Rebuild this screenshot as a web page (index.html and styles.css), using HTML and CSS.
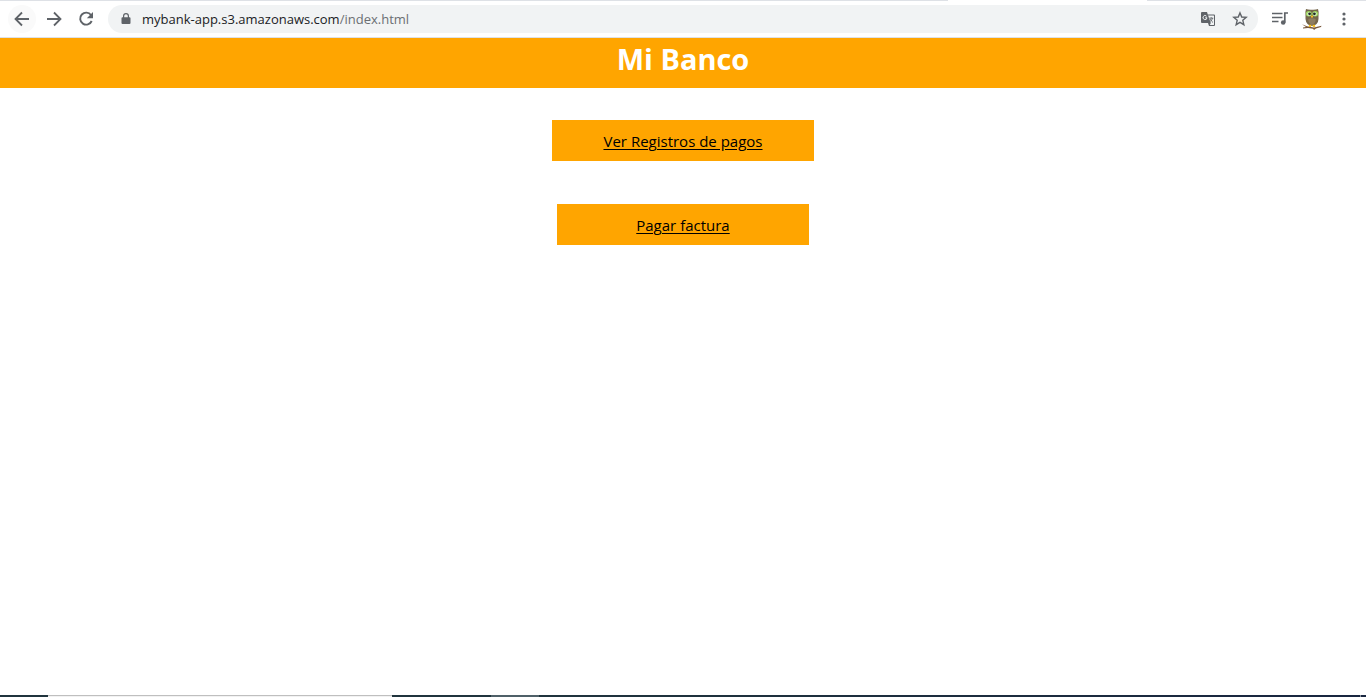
FILE: index.html
```html
<!DOCTYPE html>
<html lang="es">
<head>
<meta charset="utf-8">
<meta name="viewport" content="width=device-width, initial-scale=1">
<title>Mi Banco</title>
<link rel="stylesheet" href="styles.css">
</head>
<body>
<div class="tab-edge"><span class="tab-strip"></span><span class="tab-active"></span><span class="tab-rest"></span></div>
<div class="toolbar">
  <button class="tool tool-hover" type="button" aria-label="Atrás"><svg class="icon" viewBox="0 0 20 20"><path d="M17 10H4M10 3.500 3.500 10l6.500 6.500" fill="none" stroke="currentColor" stroke-width="1.800"/></svg></button>
  <button class="tool" type="button" aria-label="Adelante"><svg class="icon" viewBox="0 0 20 20"><path d="M3 10h13M10 3.500 16.500 10 10 16.500" fill="none" stroke="currentColor" stroke-width="1.800"/></svg></button>
  <button class="tool" type="button" aria-label="Recargar"><svg class="icon" viewBox="0 0 20 20"><path d="M15 6A6 6 0 1 0 15.700 12" fill="none" stroke="currentColor" stroke-width="1.900"/><path d="M17 3v6.200h-6.200z" fill="currentColor"/></svg></button>
  <div class="address">
    <button class="mini lock" type="button" aria-label="Ver información del sitio"><svg class="icon-small" viewBox="0 0 16 16"><path fill="currentColor" d="M5 6.200V5a3 3 0 0 1 6 0v1.200h.5q1 0 1 1V12q0 1-1 1h-7q-1 0-1-1V7.200q0-1 1-1zm1.200 0h3.600V5a1.800 1.800 0 0 0-3.600 0z"/></svg></button>
    <div class="url"><span class="host">mybank-app.s3.amazonaws.com</span>/index.html</div>
    <button class="mini" type="button" aria-label="Traducir"><svg class="icon-small" viewBox="0 0 16 16"><path fill="currentColor" d="M2 1h5l.8 2.500H14q1 0 1 1V14q0 1-1 1H9l-1-3H2q-1 0-1-1V2q0-1 1-1z"/><path fill="#f1f3f4" d="M8.100 4.500h5.400q.5 0 .5.500v8.500q0 .5-.5.500H9.800l1-2z"/><path d="M6.500 5.200A2 2 0 1 0 7 6.800H5.200" fill="none" stroke="#f1f3f4" stroke-width="1"/><path d="M9.300 7.200h4M11.200 6.200v1M12.500 7.200q-.5 1.900-2.300 3.400M10.300 8.200q1 2 2.700 3.300" fill="none" stroke="currentColor" stroke-width=".9"/></svg></button>
    <button class="mini" type="button" aria-label="Añadir a marcadores"><svg class="icon-small" viewBox="0 0 16 16"><path d="m8 1.900 1.750 4.100 4.450.400-3.400 2.900 1.050 4.400L8 11.350 4.150 13.700 5.200 9.300 1.800 6.400 6.250 6z" fill="none" stroke="currentColor" stroke-width="1.400"/></svg></button>
  </div>
  <button class="tool media" type="button" aria-label="Controlar multimedia"><svg class="icon" viewBox="0 0 20 20"><path d="M2 4.500h10.500M2 8.500h10.500M2 12.500h6.500M14.800 13.500v-9.500H18" fill="none" stroke="currentColor" stroke-width="1.700"/><circle cx="13.200" cy="13.500" r="2.300" fill="currentColor"/></svg></button>
  <button class="tool" type="button" aria-label="Perfil"><svg class="avatar" viewBox="0 0 24 24">
    <path d="M2 17.300 7 19.300l7 1.200 7.500-1.700-.5 1.300-5 1.500-2 1.400-1-1.300-5-.8-5 .6v-.9l3-.6z" fill="#79583b"/>
    <path d="M6 2q2 .9 6 .7 4 .2 6-.7 1 3 .5 6v4q-.3 6-6.500 7-6-1-6.500-7V8q-.5-3 .5-6z" fill="#75664b"/>
    <path d="M8.300 12q3.700-1.500 7.400 0 0 4.500-3.700 6-3.700-1.500-3.700-6z" fill="#8f7d60"/>
    <ellipse cx="8.800" cy="6.800" rx="2.900" ry="2.700" fill="#9cd75d"/><ellipse cx="15.200" cy="6.800" rx="2.900" ry="2.700" fill="#9cd75d"/>
    <circle cx="9.200" cy="6.900" r="1.900" fill="#e7f4dc"/><circle cx="14.800" cy="6.900" r="1.900" fill="#e7f4dc"/>
    <circle cx="9.600" cy="6.800" r="1.400" fill="#1d2b20"/><circle cx="14.400" cy="6.800" r="1.400" fill="#1d2b20"/>
    <path d="m12 8 1.200 1.500L12 11.200l-1.200-1.700zM9 17.800h2.300l-.3 2.200H8.800zm3.700 0H15l.3 2.200h-2.500z" fill="#f6c026"/></svg></button>
  <button class="tool" type="button" aria-label="Menú"><svg class="icon" viewBox="0 0 20 20" fill="currentColor"><circle cx="10" cy="5" r="1.600"/><circle cx="10" cy="10" r="1.600"/><circle cx="10" cy="15" r="1.600"/></svg></button>
</div>
<header class="header"><h1 class="title">Mi Banco</h1></header>
<main class="actions">
  <a class="action action-records" href="#registros">Ver Registros de pagos</a>
  <a class="action action-pay" href="#pagar">Pagar factura</a>
</main>
<div class="taskbar"><span class="task-start"></span><span class="task-search"></span><span class="task-apps"></span><span class="task-open"></span><span class="task-rest"></span><span class="task-end"></span></div>
</body>
</html>
```
FILE: styles.css
```css
* { box-sizing: border-box; }
body {
  margin: 0;
  min-height: 100vh;
  display: flex;
  flex-direction: column;
  background: #fff;
  color: #000;
  font-family: "Segoe UI", "Open Sans", "Noto Sans", sans-serif;
  font-size: 15px;
}
.tab-edge { display: flex; height: 1px; }
.tab-strip { flex: 948; background: #dee1e6; }
.tab-active { flex: 199; background: #fff; }
.tab-rest { flex: 219; background: #dee1e6; }
.toolbar {
  display: flex;
  align-items: center;
  gap: 4px;
  height: 37px;
  padding: 0 8px;
  border-bottom: 1px solid #dee1e6;
}
button { padding: 0; border: 0; background: none; color: #5f6368; }
.tool {
  display: grid;
  place-items: center;
  flex: none;
  width: 28px;
  height: 28px;
  border-radius: 50%;
}
.tool-hover { background: #fafafa; }
.icon { width: 20px; height: 20px; }
.avatar { width: 24px; height: 24px; }
.address {
  display: flex;
  align-items: center;
  flex: 1;
  min-width: 0;
  height: 28px;
  margin-left: 4px;
  padding: 0 6px;
  border-radius: 14px;
  background: #f1f3f4;
}
.mini { display: grid; place-items: center; flex: none; width: 24px; height: 24px; margin-left: 8px; }
.lock { margin: 0 4px 0 0; }
.icon-small { width: 16px; height: 16px; }
.url {
  flex: 1;
  overflow: hidden;
  white-space: nowrap;
  color: #6b6f73;
  font-size: 13px;
  line-height: 20px;
}
.host { color: #202124; }
.media { margin-left: 4px; }
.header { padding: 0 16px 8px; background: #ffa500; }
.title {
  margin: 0;
  color: #fff;
  font-size: 29px;
  line-height: 42px;
  text-align: center;
}
.actions {
  flex: 1;
  display: flex;
  flex-direction: column;
  align-items: center;
  gap: 43px;
  padding: 32px 16px;
}
.action {
  padding: 11px 16px 9px;
  background: #ffa500;
  color: #000;
  line-height: 21px;
  text-align: center;
  text-underline-offset: 2px;
}
.action-records { min-width: 262px; }
.action-pay { min-width: 252px; }
.taskbar { display: flex; height: 2px; background: #20343d; }
.task-start { flex: 48; }
.task-search { flex: 344; border-top: 1px solid #bfbfbf; background: #f2f2f2; }
.task-apps { flex: 99; }
.task-open { flex: 48; background: #4f6068; }
.task-rest { flex: 822; background: linear-gradient(90deg, #20343d, #192640); }
.task-end { flex: 5; border-left: 1px solid #8b94a0; background: #192640; }
```
